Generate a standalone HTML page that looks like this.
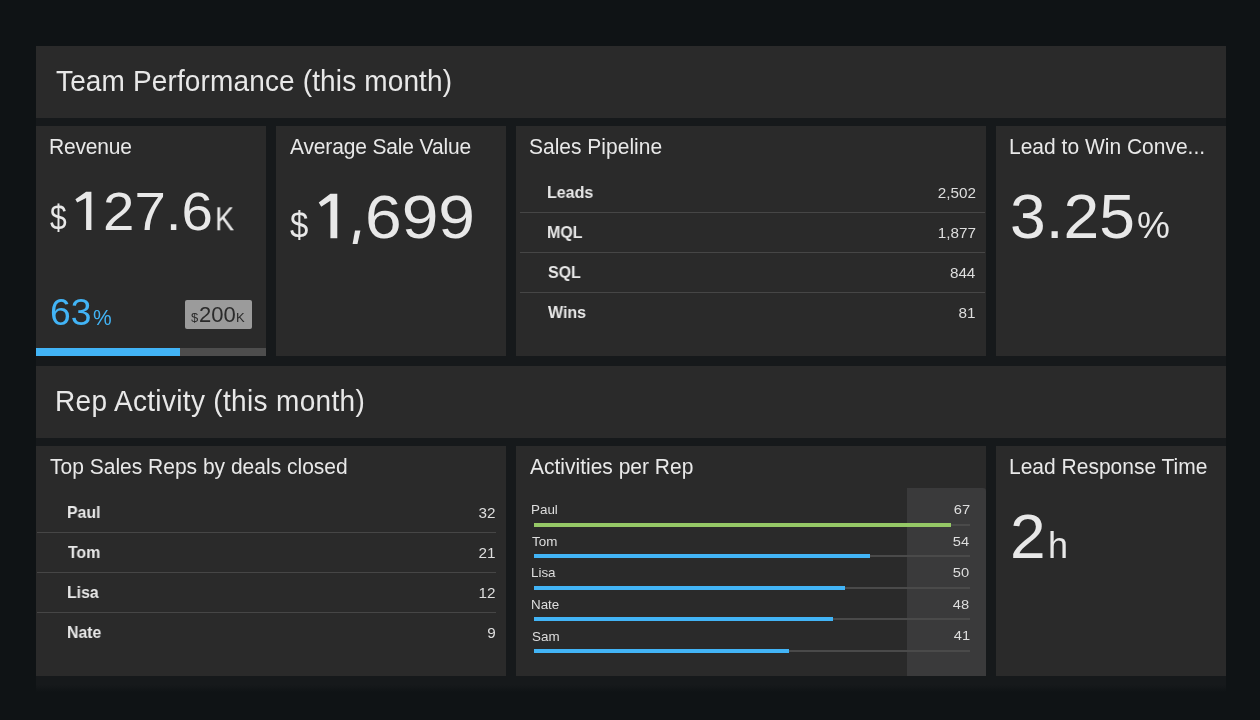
<!DOCTYPE html>
<html><head><meta charset="utf-8"><style>
html,body{margin:0;padding:0;}
body{width:1260px;height:720px;overflow:hidden;background:#0f1315;position:relative;font-family:"Liberation Sans",sans-serif;}
.b{position:absolute;}
.t{position:absolute;line-height:1;white-space:nowrap;will-change:transform;}
</style></head><body>
<div class="b" style="left:36px;top:46px;width:1190px;height:630px;background:#16191b;"></div>
<div class="b" style="left:36px;top:676px;width:1190px;height:16px;background:#16191b;background:linear-gradient(#16191b 0%,#16191b 55%,#0f1315 100%);"></div>
<div class="b" style="left:36px;top:46px;width:1190px;height:72px;background:#2a2a2a;"></div>
<div class="b" style="left:36px;top:126px;width:230px;height:230px;background:#2a2a2a;"></div>
<div class="b" style="left:276px;top:126px;width:230px;height:230px;background:#2a2a2a;"></div>
<div class="b" style="left:516px;top:126px;width:470px;height:230px;background:#2a2a2a;"></div>
<div class="b" style="left:996px;top:126px;width:230px;height:230px;background:#2a2a2a;"></div>
<div class="b" style="left:36px;top:366px;width:1190px;height:72px;background:#2a2a2a;"></div>
<div class="b" style="left:36px;top:446px;width:470px;height:230px;background:#2a2a2a;"></div>
<div class="b" style="left:516px;top:446px;width:470px;height:230px;background:#2a2a2a;"></div>
<div class="b" style="left:996px;top:446px;width:230px;height:230px;background:#2a2a2a;"></div>
<div class="t" style="left:56.37px;top:68.29px;font-size:28px;color:#e8e8e8;letter-spacing:0.14px;transform:scale(1,1.05);transform-origin:0 23.71px;">Team Performance (this month)</div>
<div class="t" style="left:55.30px;top:388.29px;font-size:28px;color:#e8e8e8;letter-spacing:0.33px;transform:scale(1,1.05);transform-origin:0 23.71px;">Rep Activity (this month)</div>
<div class="t" style="left:49.28px;top:136.02px;font-size:21px;color:#e8e8e8;letter-spacing:-0.2px;transform:scale(1,1.06);transform-origin:0 17.78px;">Revenue</div>
<div class="t" style="left:289.96px;top:136.02px;font-size:21px;color:#e8e8e8;letter-spacing:-0.15px;transform:scale(1,1.06);transform-origin:0 17.78px;">Average Sale Value</div>
<div class="t" style="left:529.05px;top:136.02px;font-size:21px;color:#e8e8e8;transform:scale(1,1.06);transform-origin:0 17.78px;">Sales Pipeline</div>
<div class="t" style="left:1008.78px;top:136.02px;font-size:21px;color:#e8e8e8;transform:scale(1,1.06);transform-origin:0 17.78px;">Lead to Win Conve...</div>
<div class="t" style="left:50.23px;top:456.02px;font-size:21px;color:#e8e8e8;transform:scale(1,1.06);transform-origin:0 17.78px;">Top Sales Reps by deals closed</div>
<div class="t" style="left:529.96px;top:456.02px;font-size:21px;color:#e8e8e8;transform:scale(1,1.06);transform-origin:0 17.78px;">Activities per Rep</div>
<div class="t" style="left:1008.78px;top:456.02px;font-size:21px;color:#e8e8e8;transform:scale(1,1.06);transform-origin:0 17.78px;">Lead Response Time</div>
<div class="t" style="left:50.28px;top:205.30px;font-size:30px;color:#e8e8e8;transform:scale(1,1.15);transform-origin:0 25.40px;">$</div>
<div class="t" style="left:102.96px;top:184.28px;font-size:54px;color:#e8e8e8;transform:scale(1.045,1);transform-origin:0 45.72px;">27.6</div>
<div class="t" style="left:214.64px;top:202.91px;font-size:32px;color:#e8e8e8;transform:scale(0.9,1.06);transform-origin:0 27.09px;">K</div>
<div class="t" style="left:49.70px;top:295.37px;font-size:35px;color:#42b4f6;transform:scale(1.0666666666666667,1.075);transform-origin:0 29.63px;">63</div>
<div class="t" style="left:93.05px;top:307.42px;font-size:21px;color:#42b4f6;transform:scale(1,1.05);transform-origin:0 17.78px;">%</div>
<div class="b" style="left:185px;top:300px;width:67px;height:29px;background:#9b9b9b;border-radius:2px;"></div>
<div class="t" style="left:191.36px;top:310.89px;font-size:13px;color:#2b2b2b;">$</div>
<div class="t" style="left:198.69px;top:304.12px;font-size:21px;color:#2b2b2b;transform:scale(1.05,1.07);transform-origin:0 17.78px;">200</div>
<div class="t" style="left:235.93px;top:310.89px;font-size:13px;color:#2b2b2b;">K</div>
<div class="b" style="left:36px;top:348px;width:230px;height:8px;background:#4d4d4d;"></div>
<div class="b" style="left:36px;top:348px;width:144px;height:8px;background:#42b4f6;"></div>
<div class="t" style="left:290.45px;top:210.36px;font-size:33px;color:#e8e8e8;transform:scale(1,1.14);transform-origin:0 27.94px;">$</div>
<div class="t" style="left:364.55px;top:186.65px;font-size:61px;color:#e8e8e8;transform:scale(1.081,1);transform-origin:0 51.65px;">699</div>
<div class="t" style="left:547.03px;top:184.13px;font-size:16.5px;color:#e8e8e8;font-weight:bold;transform:scale(0.97,1);transform-origin:0 13.97px;">Leads</div>
<div class="t" style="right:284.33px;top:186.25px;font-size:14px;color:#dedede;transform:scale(1.09,1);transform-origin:100% 11.85px;">2,502</div>
<div class="b" style="left:520px;top:212px;width:465px;height:1px;background:#464646;"></div>
<div class="t" style="left:547.03px;top:224.13px;font-size:16.5px;color:#e8e8e8;font-weight:bold;transform:scale(0.97,1);transform-origin:0 13.97px;">MQL</div>
<div class="t" style="right:284.33px;top:226.25px;font-size:14px;color:#dedede;transform:scale(1.09,1);transform-origin:100% 11.85px;">1,877</div>
<div class="b" style="left:520px;top:252px;width:465px;height:1px;background:#464646;"></div>
<div class="t" style="left:547.64px;top:264.13px;font-size:16.5px;color:#e8e8e8;font-weight:bold;transform:scale(0.97,1);transform-origin:0 13.97px;">SQL</div>
<div class="t" style="right:284.65px;top:266.25px;font-size:14px;color:#dedede;transform:scale(1.09,1);transform-origin:100% 11.85px;">844</div>
<div class="b" style="left:520px;top:292px;width:465px;height:1px;background:#464646;"></div>
<div class="t" style="left:548.08px;top:304.13px;font-size:16.5px;color:#e8e8e8;font-weight:bold;transform:scale(0.97,1);transform-origin:0 13.97px;">Wins</div>
<div class="t" style="right:284.35px;top:306.25px;font-size:14px;color:#dedede;transform:scale(1.09,1);transform-origin:100% 11.85px;">81</div>
<div class="t" style="left:1009.65px;top:186.95px;font-size:61px;color:#e8e8e8;transform:scale(1.0526315789473684,1.04);transform-origin:0 51.65px;">3.25</div>
<div class="t" style="left:1136.58px;top:207.27px;font-size:37px;color:#e8e8e8;">%</div>
<div class="t" style="left:67.14px;top:504.13px;font-size:16.5px;color:#e8e8e8;font-weight:bold;transform:scale(0.96,1);transform-origin:0 13.97px;">Paul</div>
<div class="t" style="right:764.33px;top:506.25px;font-size:14px;color:#dedede;transform:scale(1.09,1);transform-origin:100% 11.85px;">32</div>
<div class="b" style="left:37px;top:532px;width:459px;height:1px;background:#464646;"></div>
<div class="t" style="left:68.02px;top:544.13px;font-size:16.5px;color:#e8e8e8;font-weight:bold;transform:scale(0.96,1);transform-origin:0 13.97px;">Tom</div>
<div class="t" style="right:764.35px;top:546.25px;font-size:14px;color:#dedede;transform:scale(1.09,1);transform-origin:100% 11.85px;">21</div>
<div class="b" style="left:37px;top:572px;width:459px;height:1px;background:#464646;"></div>
<div class="t" style="left:67.14px;top:584.13px;font-size:16.5px;color:#e8e8e8;font-weight:bold;transform:scale(0.96,1);transform-origin:0 13.97px;">Lisa</div>
<div class="t" style="right:764.33px;top:586.25px;font-size:14px;color:#dedede;transform:scale(1.09,1);transform-origin:100% 11.85px;">12</div>
<div class="b" style="left:37px;top:612px;width:459px;height:1px;background:#464646;"></div>
<div class="t" style="left:67.14px;top:624.13px;font-size:16.5px;color:#e8e8e8;font-weight:bold;transform:scale(0.96,1);transform-origin:0 13.97px;">Nate</div>
<div class="t" style="right:764.38px;top:626.25px;font-size:14px;color:#dedede;transform:scale(1.09,1);transform-origin:100% 11.85px;">9</div>
<div class="b" style="left:907px;top:488px;width:79px;height:188px;background:#3a3a3b;border-top-right-radius:3px;"></div>
<div class="t" style="left:531.10px;top:503.35px;font-size:13.4px;color:#dedede;">Paul</div>
<div class="t" style="right:290.36px;top:503.19px;font-size:13.6px;color:#dedede;transform:scale(1.08,1);transform-origin:100% 11.51px;">67</div>
<div class="b" style="left:534px;top:524px;width:436px;height:2px;background:#4a4a4a;"></div>
<div class="b" style="left:534px;top:523px;width:417px;height:4px;background:#95c866;"></div>
<div class="t" style="left:531.90px;top:534.90px;font-size:13.4px;color:#dedede;">Tom</div>
<div class="t" style="right:290.67px;top:534.74px;font-size:13.6px;color:#dedede;transform:scale(1.08,1);transform-origin:100% 11.51px;">54</div>
<div class="b" style="left:534px;top:555px;width:436px;height:2px;background:#4a4a4a;"></div>
<div class="b" style="left:534px;top:554px;width:336px;height:4px;background:#42b4f6;"></div>
<div class="t" style="left:531.10px;top:566.45px;font-size:13.4px;color:#dedede;">Lisa</div>
<div class="t" style="right:290.53px;top:566.29px;font-size:13.6px;color:#dedede;transform:scale(1.08,1);transform-origin:100% 11.51px;">50</div>
<div class="b" style="left:534px;top:587px;width:436px;height:2px;background:#4a4a4a;"></div>
<div class="b" style="left:534px;top:586px;width:311px;height:4px;background:#42b4f6;"></div>
<div class="t" style="left:531.10px;top:598.00px;font-size:13.4px;color:#dedede;">Nate</div>
<div class="t" style="right:290.46px;top:597.84px;font-size:13.6px;color:#dedede;transform:scale(1.08,1);transform-origin:100% 11.51px;">48</div>
<div class="b" style="left:534px;top:618px;width:436px;height:2px;background:#4a4a4a;"></div>
<div class="b" style="left:534px;top:617px;width:299px;height:4px;background:#42b4f6;"></div>
<div class="t" style="left:531.59px;top:629.55px;font-size:13.4px;color:#dedede;">Sam</div>
<div class="t" style="right:290.38px;top:629.39px;font-size:13.6px;color:#dedede;transform:scale(1.08,1);transform-origin:100% 11.51px;">41</div>
<div class="b" style="left:534px;top:650px;width:436px;height:2px;background:#4a4a4a;"></div>
<div class="b" style="left:534px;top:649px;width:255px;height:4px;background:#42b4f6;"></div>
<div class="t" style="left:1009.88px;top:507.15px;font-size:61px;color:#e8e8e8;transform:scale(1.05,1.03);transform-origin:0 51.65px;">2</div>
<div class="t" style="left:1048.00px;top:527.62px;font-size:36px;color:#e8e8e8;">h</div>
<svg style="position:absolute;left:0;top:0" width="1260" height="720" viewBox="0 0 1260 720"><polygon fill="#e8e8e8" points="75.4,199.2 86.1,191.8 91.4,191.8 91.4,230 86.1,230 86.1,198 77.2,202.6"/><polygon fill="#e8e8e8" points="318.75,202.5 330.4,193.75 337.3,193.75 337.3,238.2 330.4,238.2 330.4,200.8 321.25,206.7"/><polygon fill="#e8e8e8" points="355,230.4 360.4,230.4 357.5,244 352.6,244"/></svg>
</body></html>
